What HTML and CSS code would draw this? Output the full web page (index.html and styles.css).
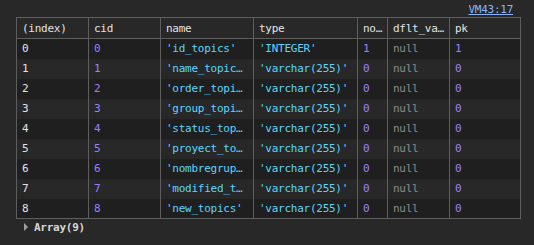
FILE: index.html
```html
<!DOCTYPE html>
<html lang="en">
<head>
    <meta charset="UTF-8">
    <title>Console</title>
    <link rel="stylesheet" href="styles.css">
</head>
<body>
    <div class="source">
        <a href="#">VM43:17</a>
    </div>

    <table class="console-table">
        <colgroup>
            <col class="c-index">
            <col class="c-cid">
            <col class="c-name">
            <col class="c-type">
            <col class="c-notnull">
            <col class="c-dflt">
            <col class="c-pk">
        </colgroup>
        <thead>
            <tr>
                <th>(index)</th>
                <th>cid</th>
                <th>name</th>
                <th>type</th>
                <th>no…</th>
                <th>dflt_va…</th>
                <th>pk</th>
            </tr>
        </thead>
        <tbody>
            <tr>
                <td>0</td><td class="num">0</td><td class="str">'id_topics'</td><td class="str">'INTEGER'</td>
                <td class="num">1</td><td class="nul">null</td><td class="num">1</td>
            </tr>
            <tr>
                <td>1</td><td class="num">1</td><td class="str">'name_topic…</td><td class="str">'varchar(255)'</td>
                <td class="num">0</td><td class="nul">null</td><td class="num">0</td>
            </tr>
            <tr>
                <td>2</td><td class="num">2</td><td class="str">'order_topi…</td><td class="str">'varchar(255)'</td>
                <td class="num">0</td><td class="nul">null</td><td class="num">0</td>
            </tr>
            <tr>
                <td>3</td><td class="num">3</td><td class="str">'group_topi…</td><td class="str">'varchar(255)'</td>
                <td class="num">0</td><td class="nul">null</td><td class="num">0</td>
            </tr>
            <tr>
                <td>4</td><td class="num">4</td><td class="str">'status_top…</td><td class="str">'varchar(255)'</td>
                <td class="num">0</td><td class="nul">null</td><td class="num">0</td>
            </tr>
            <tr>
                <td>5</td><td class="num">5</td><td class="str">'proyect_to…</td><td class="str">'varchar(255)'</td>
                <td class="num">0</td><td class="nul">null</td><td class="num">0</td>
            </tr>
            <tr>
                <td>6</td><td class="num">6</td><td class="str">'nombregrup…</td><td class="str">'varchar(255)'</td>
                <td class="num">0</td><td class="nul">null</td><td class="num">0</td>
            </tr>
            <tr>
                <td>7</td><td class="num">7</td><td class="str">'modified_t…</td><td class="str">'varchar(255)'</td>
                <td class="num">0</td><td class="nul">null</td><td class="num">0</td>
            </tr>
            <tr>
                <td>8</td><td class="num">8</td><td class="str">'new_topics'</td><td class="str">'varchar(255)'</td>
                <td class="num">0</td><td class="nul">null</td><td class="num">0</td>
            </tr>
        </tbody>
    </table>

    <div class="array-line">
        <span class="arrow"></span>
        <span class="label">Array(9)</span>
    </div>
</body>
</html>
```

FILE: styles.css
```css
* {
    margin: 0;
    padding: 0;
    box-sizing: border-box;
}

body {
    background: #282828;
    color: #e3e3e3;
    font-family: 'DejaVu Sans Mono', 'Liberation Mono', monospace;
    font-size: 11px;
    letter-spacing: -0.26px;
    width: 534px;
    height: 245px;
    overflow: hidden;
}

.source {
    height: 17px;
    display: flex;
    justify-content: flex-end;
    align-items: center;
    padding-right: 21px;
    padding-top: 1px;
}

.source a {
    color: #8ab4f8;
    text-decoration: underline;
}

.console-table {
    margin-left: 16px;
    width: 504px;
    table-layout: fixed;
    border-collapse: collapse;
    border: 1px solid #5e5e5e;
}

.c-index { width: 72px; }
.c-cid { width: 72px; }
.c-name { width: 93px; }
.c-type { width: 104px; }
.c-notnull { width: 30px; }
.c-dflt { width: 62px; }
.c-pk { width: 71px; }

.console-table th,
.console-table td {
    border-left: 1px solid #5e5e5e;
    border-right: 1px solid #5e5e5e;
    padding: 0 5px;
    text-align: left;
    font-weight: normal;
    white-space: nowrap;
    overflow: hidden;
    height: 20px;
}

.console-table th {
    height: 21px;
    border-bottom: 1px solid #5e5e5e;
    background: #282828;
}

.console-table tbody tr:nth-child(odd) {
    background: #1f1f1f;
}

.console-table tbody tr:nth-child(even) {
    background: #282828;
}

.num {
    color: #9980ff;
}

.str {
    color: #5cd5fb;
}

.nul {
    color: #8b8b8b;
}

.array-line {
    display: flex;
    align-items: center;
    gap: 6px;
    height: 16px;
    padding-left: 24px;
    color: #d6d6d6;
}

.array-line .label {
    font-weight: bold;
}

.arrow {
    width: 0;
    height: 0;
    border-top: 4px solid transparent;
    border-bottom: 4px solid transparent;
    border-left: 4px solid #a0a0a0;
}
```
